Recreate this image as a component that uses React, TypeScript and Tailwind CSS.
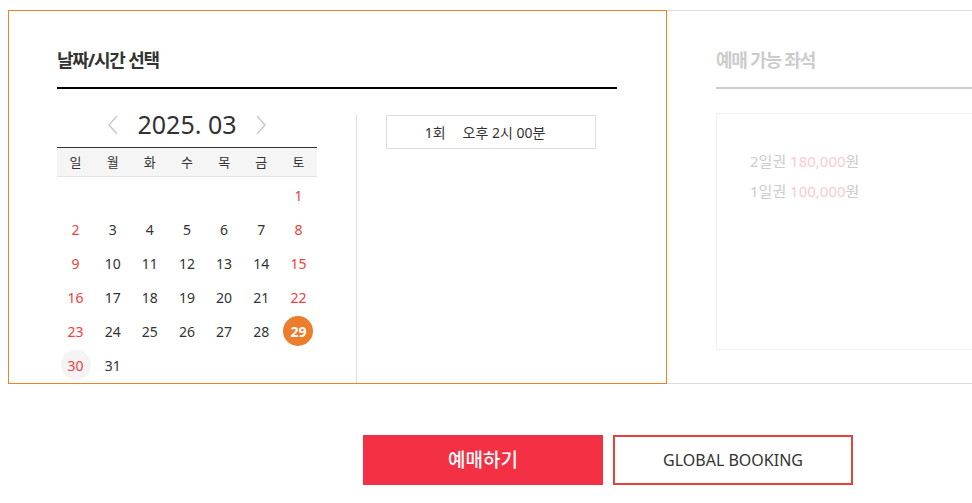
const days: (number | null)[] = [
  null, null, null, null, null, null, 1,
  2, 3, 4, 5, 6, 7, 8,
  9, 10, 11, 12, 13, 14, 15,
  16, 17, 18, 19, 20, 21, 22,
  23, 24, 25, 26, 27, 28, 29,
  30, 31,
];

const weekdays = ['일', '월', '화', '수', '목', '금', '토'];

const Chevron = ({ dir }: { dir: 'left' | 'right' }) => (
  <svg width="12" height="20" viewBox="0 0 12 20" fill="none">
    <path
      d={dir === 'left' ? 'M10 1 L2 10 L10 19' : 'M2 1 L10 10 L2 19'}
      stroke="#c8c8c8"
      strokeWidth="1.4"
    />
  </svg>
);

const DayCell = ({ day, index }: { day: number | null; index: number }) => {
  if (day === null) return <div className="h-[34px]" />;
  const weekend = index % 7 === 0 || index % 7 === 6;
  const selected = day === 29;
  const today = day === 30;
  return (
    <div className="h-[34px] flex items-center justify-center">
      <span
        className={
          'w-[30px] h-[30px] rounded-full flex items-center justify-center text-[14px] ' +
          (selected
            ? 'bg-[#ec7d2c] text-white font-bold'
            : today
            ? 'bg-[#f4f4f4] text-[#ee4040]'
            : weekend
            ? 'text-[#ee4040]'
            : 'text-[#333]')
        }
      >
        {day}
      </span>
    </div>
  );
};

export default function App() {
  return (
    <div
      className="w-full overflow-hidden bg-white"
      style={{ fontFamily: '"Noto Sans", "Noto Sans CJK KR", sans-serif' }}
    >
      <div className="w-[1200px] ml-2 pt-[10px]">
        <div className="flex">
          {/* 날짜/시간 선택 */}
          <div className="w-[659px] h-[374px] border border-[#f0812a] pl-[48px] pt-[37px] overflow-hidden">
            <div className="w-[560px]">
              <h3 className="text-[18px] leading-6 font-bold text-[#333] tracking-[-1.2px] pb-[15px] border-b-2 border-black">
                날짜/시간 선택
              </h3>
              <div className="flex mt-[20px] h-[300px]">
                <div className="w-[260px]">
                  <div className="h-[38px] pt-[3px] flex items-start justify-center gap-[18px]">
                    <span className="mt-[3px]"><Chevron dir="left" /></span>
                    <span className="text-[25px] leading-6 text-[#333]">2025. 03</span>
                    <span className="mt-[3px]"><Chevron dir="right" /></span>
                  </div>
                  <div className="grid grid-cols-7 h-[30px] items-center bg-[#f5f5f5] border-t border-[#333] border-b border-b-[#e2e2e2] text-[13px] text-[#333]">
                    {weekdays.map((w) => (
                      <span key={w} className="text-center pt-px">{w}</span>
                    ))}
                  </div>
                  <div className="grid grid-cols-7 pt-[1px]">
                    {days.map((d, i) => (
                      <DayCell key={i} day={d} index={i} />
                    ))}
                  </div>
                </div>
                <div className="w-px bg-[#ddd] ml-[39px] mt-[6px]" />
                <div className="ml-[29px] mt-[6px]">
                  <button className="w-[210px] h-[34px] border border-[#ddd] text-[14px] text-[#333] flex items-center justify-center pr-[12px]">
                    <span>1회</span>
                    <span className="ml-[17px]">오후 2시 00분</span>
                  </button>
                </div>
              </div>
            </div>
          </div>

          {/* 예매 가능 좌석 */}
          <div className="flex-1 h-[374px] border-y border-[#ddd] pl-[49px] pt-[37px]">
            <h3 className="text-[18px] leading-6 font-bold text-[#ccc] tracking-[-1.2px] pb-[15px] border-b-2 border-[#ccc]">
              예매 가능 좌석
            </h3>
            <div className="mt-[24px] h-[237px] border border-[#f2f2f2] pl-[33px] pt-[35px] text-[15px] text-[#ccc] flex flex-col gap-[6px]">
              <p className="leading-6">2일권 <span className="text-[#f8cccc]">180,000</span>원</p>
              <p className="leading-6">1일권 <span className="text-[#f8cccc]">100,000</span>원</p>
            </div>
          </div>
        </div>

        <div className="flex justify-center gap-[10px] mt-[51px] pb-[18px]">
          <button className="w-[240px] h-[50px] bg-[#f43144] text-white text-[19px] font-medium">
            예매하기
          </button>
          <button className="w-[240px] h-[50px] border-2 border-[#e8403a] bg-white text-[#333] text-[16px]">
            GLOBAL BOOKING
          </button>
        </div>
      </div>
    </div>
  );
}
